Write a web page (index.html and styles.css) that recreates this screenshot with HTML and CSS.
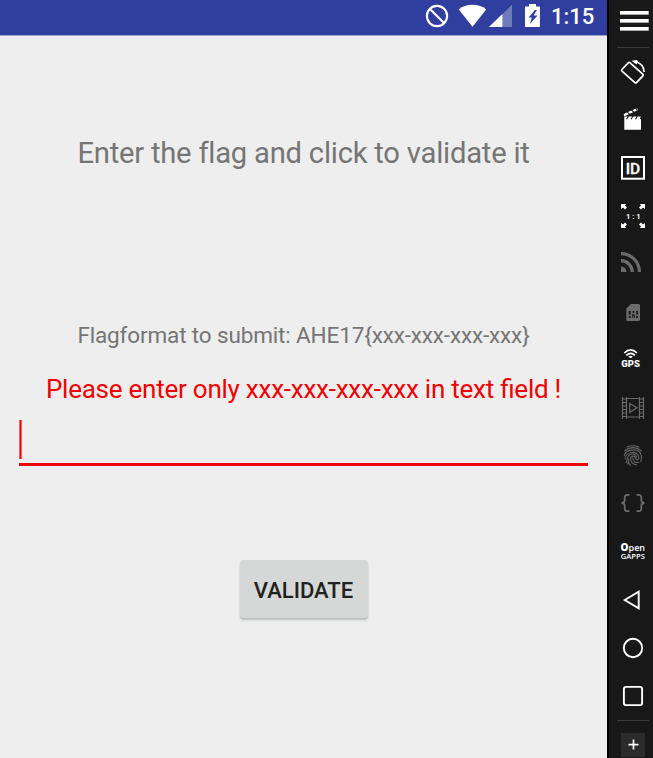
FILE: index.html
```html
<!DOCTYPE html>
<html lang="en">
<head>
<meta charset="utf-8">
<title>Flag validator</title>
<link rel="stylesheet" href="styles.css">
</head>
<body>
<div class="emulator">
  <main class="phone">
    <header class="status">
      <svg class="status-icons" width="120" height="35" viewBox="423 0 120 35">
        <g fill="none" stroke="#fff" stroke-width="2.100"><circle cx="437" cy="16" r="10.1"/><path d="M430 9l14 14"/></g>
        <path fill="#fff" d="M472.5 26.700L458.800 9.400Q464.500 4.800 472.500 4.800T486.200 9.400Z"/>
        <path fill="#6f7abd" d="M512 4.700V27H489Z"/>
        <path fill="#fff" d="M502.400 14V27H489Z"/>
        <path fill="#fff" d="M529 4h7v2.500h3.900V27H525V6.500h4z"/>
        <path fill="#303f9f" d="M535 10l-6.500 7.500h3.300l-1.800 6.500 7.500-8.500h-3.900l3.400-5.500z"/>
      </svg>
      <span class="clock">1:15</span>
    </header>
    <p class="title">Enter the flag and click to validate it</p>
    <p class="format">Flagformat to submit: AHE17{xxx-xxx-xxx-xxx}</p>
    <p class="warning">Please enter only xxx-xxx-xxx-xxx in text field !</p>
    <div class="field"><span class="caret"></span></div>
    <button class="validate">VALIDATE</button>
  </main>
  <aside class="toolbar">
    <svg class="cell" viewBox="0 0 44 48"><path fill="#aaa" d="M11 14h28.700v1H11zm0 8h28.700v1H11zm0 8h28.700v1H11z"/><path fill="#fff" d="M11 11h28.700v3H11zm0 8h28.700v3H11zm0 8h28.700v3H11z"/><path fill="#3b3b3b" d="M8 47h32v1H8z"/></svg>
    <svg class="cell" viewBox="0 0 44 48"><g fill="none" stroke="#fff" stroke-width="1.700" stroke-linejoin="round"><path d="M12.900 21.500L19.200 14.800Q20 14 20.800 14.700L33.800 26.200Q34.600 27 33.900 27.800L27.500 34.600Q26.700 35.300 25.900 34.600L13 23.200Q12.200 22.400 12.900 21.500Z"/><path d="M26 13.500Q34.500 15.500 35.200 24"/></g><path fill="#fff" d="M22.500 12.800l5.500-.8 1 1.700-1.500 2.800z"/></svg>
    <svg class="cell" viewBox="0 0 44 48"><path fill="#fff" d="M15.300 20.500H32V33.700H15.300zM14.600 18.500l1.500-1.300 12-5.200.8 2.100-13.500 6.100z"/><path stroke="#181818" stroke-width="1.100" d="M18 15.500l2.300 2.600m2-4.500l2.300 2.600m1.900-4.300l1.600 2M19.500 20l-2 3.300m6.500-3.300l-2 3.300m6.500-3.300l-2 3.300m6-3.300l-1 3"/></svg>
    <svg class="cell" viewBox="0 0 44 48"><rect x="13" y="13" width="22" height="21.700" fill="none" stroke="#fff" stroke-width="2"/><text class="id-label" x="24" y="29.500">ID</text></svg>
    <svg class="cell" viewBox="0 0 44 48"><path fill="#fff" d="M12 12h5l-1 1.600 2 2-2 2-2-2-2 1.400zM36 12h-5l1 1.600-2 2 2 2 2-2 2 1.400zM12 36h5l-1-1.600 2-2-2-2-2 2-2-1.400zM36 36h-5l1-1.600-2-2 2-2 2 2 2-1.400z"/><text class="ratio-label" x="24.300" y="26.600">1 : 1</text></svg>
    <svg class="cell" viewBox="0 0 44 48"><g fill="none" stroke="#6b6b6b" stroke-width="3.200"><path d="M12 13.600A18.400 18.400 0 0 1 30.400 32M12 20.700A11.300 11.300 0 0 1 23.300 32"/></g><path fill="#6b6b6b" d="M12 26.500A5.500 5.500 0 0 1 17.500 32H12z"/></svg>
    <svg class="cell" viewBox="0 0 44 48"><path fill="#6b6b6b" d="M22 16h7.500q1.500 0 1.500 1.500v14q0 1.500-1.500 1.500h-10.700q-1.500 0-1.500-1.500v-10.800z"/><path fill="#181818" d="M19.700 23h2v3.500h-2zm4 0h1.600v2h-1.600zm3.500 0h1.800v3.500h-1.800zM19.700 28h2v2h-2zm3.400-1.500h2.700V30h-1v-2h-1v2h-.7zM27.200 28H29v2h-1.800z"/></svg>
    <svg class="cell" viewBox="0 0 44 48"><g fill="none" stroke="#fff" stroke-width="1.700"><path d="M15.300 17q6.300-6.200 12.700 0M17.300 19.300q4.300-4 8.700 0"/></g><path fill="#fff" d="M19.300 20.700q2.300-1.700 4.600 0l-2.300 1.600z"/><text class="gps-label" x="21.600" y="31">GPS</text></svg>
    <svg class="cell" viewBox="0 0 44 48"><g fill="none" stroke="#6b6b6b" stroke-width="1.200"><path d="M13.500 13v22M17.500 13v22M30.500 13v22M34.500 13v22M17.500 14.500h13M17.500 33h13M13.500 15h4M13.500 18.500h4M13.500 22h4M13.500 25.500h4M13.500 29h4M13.500 32.500h4M30.500 15h4M30.500 18.500h4M30.500 22h4M30.500 25.500h4M30.500 29h4M30.500 32.500h4M20.800 19.500l7.200 4.300-7.200 4.500z"/></g></svg>
    <svg class="cell" viewBox="0 0 44 48"><g fill="none" stroke="#686868" stroke-width="1.100" stroke-linecap="round"><path d="M18 15q6-2.500 12 0M15.700 18.700q8.300-6.200 16.600 0M15.300 23.500c1.500-7 15.500-8 17 0 .4 3-.2 5-.3 6M16 27c0-8 13.500-9 13.800-1.500.1 3-2.800 2.500-3.300.5-.6-2.600-5-2.500-5 .8 0 3 2.500 5.800 6 6M17 30.500c2-1.500 0-7.500 5.500-8.500 3-.4 4.700 1 4.900 3M18.500 32c1.700-1.500 1-3.500 1.200-5M23.800 26c.2 3.500 2.800 5 6 4.300M21.500 33.300l-1.500-2"/></g></svg>
    <svg class="cell" viewBox="0 0 44 48"><g fill="none" stroke="#6b6b6b" stroke-width="1.800"><path d="M20.500 14.800h-2q-2.800 0-2.800 2.800v2.500q0 2.700-3.200 2.900 3.200.2 3.200 2.900v2.500q0 2.800 2.800 2.800h2M27.500 14.800h2q2.800 0 2.800 2.800v2.500q0 2.700 3.200 2.900-3.200.2-3.200 2.900v2.500q0 2.800-2.800 2.800h-2"/></g></svg>
    <svg class="cell" viewBox="0 0 44 48"><text class="open-label" x="11.600" y="22.900"><tspan class="open-initial">O</tspan>pen</text><text class="gapps-label" x="11.800" y="31.300">GAPPS</text></svg>
    <svg class="cell" viewBox="0 0 44 48"><path fill="none" stroke="#fff" stroke-width="1.900" d="M15.700 24L29.700 15.600V32.400Z"/></svg>
    <svg class="cell" viewBox="0 0 44 48"><circle cx="24" cy="24" r="9.200" fill="none" stroke="#fff" stroke-width="1.900"/></svg>
    <svg class="cell" viewBox="0 0 44 48"><rect x="14.900" y="14.900" width="18.200" height="18.200" rx="2.200" fill="none" stroke="#fff" stroke-width="1.900"/></svg>
    <svg class="cell cell-last" viewBox="0 0 44 38"><path fill="#3b3b3b" d="M8 0h32v1H8z"/><path fill="#2b2b2b" d="M12 13h24v24H12z"/><path stroke="#fff" stroke-width="1.700" d="M19.500 24.600h10M24.500 19.600v10"/></svg>
  </aside>
</div>
</body>
</html>
```

FILE: styles.css
```css
body { margin: 0; font-family: Roboto, sans-serif; }
.emulator { display: flex; width: 653px; height: 758px; background: #000; overflow: hidden; }
.phone { width: 607px; display: flex; flex-direction: column; align-items: center; background: #eee; }
.status { box-sizing: border-box; width: 100%; height: 36px; flex: none; display: flex; justify-content: flex-end; background: #303f9f; border-bottom: 1px solid #9da4ce; }
.status-icons { flex: none; }
.clock { width: 64px; box-sizing: border-box; padding-left: 8px; color: #fff; font-size: 22px; font-weight: 500; line-height: 34px; white-space: nowrap; }
p { margin: 0; white-space: nowrap; color: #757575; }
.title { margin-top: 97px; font-size: 29.2px; line-height: 40px; letter-spacing: -0.22px; }
.format { margin-top: 147px; font-size: 22.5px; line-height: 30px; letter-spacing: -0.14px; }
.warning { margin-top: 19px; font-size: 26px; line-height: 40px; letter-spacing: -0.24px; font-feature-settings: "liga" 1; color: #f00000; }
.field { box-sizing: border-box; width: 569px; height: 57px; flex: none; padding-top: 11px; border-bottom: 3px solid #f00000; }
.caret { display: block; box-sizing: border-box; width: 3px; height: 39px; background: #f00000; border: solid #f06060; border-width: 0 1px; }
.validate { width: 128px; height: 58px; flex: none; margin-top: 94px; padding: 3px 0 0; border: 0; border-radius: 3px; background: #d6d8d7; box-shadow: 0 2px 2px #bcbdbd; color: #212121; font: 500 22px/55px Roboto, sans-serif; }
.toolbar { width: 44px; margin-left: 2px; display: flex; flex-direction: column; background: #181818; }
.cell { display: block; width: 44px; height: 48px; flex: none; }
.cell-last { height: 38px; }
text { fill: #fff; font-family: Roboto, sans-serif; }
.id-label { font-size: 15.5px; font-weight: 500; text-anchor: middle; stroke: #fff; stroke-width: 0.3px; }
.ratio-label { font-size: 7.5px; font-weight: 700; text-anchor: middle; }
.gps-label { font-size: 9.5px; font-weight: 900; text-anchor: middle; }
.open-label { font-family: "Open Sans", sans-serif; font-size: 9px; font-weight: 600; }
.open-initial { font-size: 10px; font-weight: 800; }
.gapps-label { font-family: "Open Sans", sans-serif; font-size: 7.6px; font-weight: 600; }
```
